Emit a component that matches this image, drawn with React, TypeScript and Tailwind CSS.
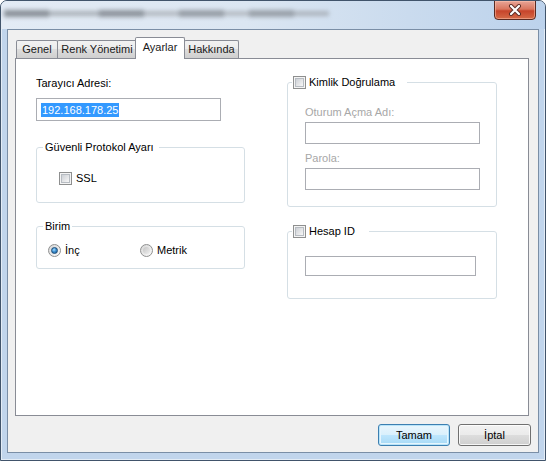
import React from "react";

const Check = () => (
  <span className="inline-flex w-[13px] h-[13px] shrink-0 border border-[#8e8f8f] bg-[#f4f4f4] p-[1px]">
    <span className="block w-full h-full border border-[#b7bcc2] bg-[linear-gradient(135deg,#cdd1d6_0%,#e6e7e9_60%,#f7f7f7_100%)]" />
  </span>
);

const Radio = ({ checked }: { checked?: boolean }) => (
  <span className="inline-flex w-[13px] h-[13px] shrink-0 rounded-full border border-[#8e8f8f] bg-[linear-gradient(135deg,#d6d6d6,#fbfbfb)] items-center justify-center">
    {checked ? (
      <span className="block w-[7px] h-[7px] rounded-full border border-[#1d4d78] bg-[radial-gradient(circle_at_40%_35%,#a9e0ff_0%,#3d8fd0_45%,#1b5a92_100%)]" />
    ) : (
      <span className="block w-[7px] h-[7px] rounded-full bg-[linear-gradient(135deg,#c4c4c4,#efefef)]" />
    )}
  </span>
);

const Tab = ({
  label,
  w,
  selected,
  first,
}: {
  label: string;
  w: string;
  selected?: boolean;
  first?: boolean;
}) => (
  <div
    className={
      selected
        ? `relative z-10 -ml-[2px] h-[22px] mb-[-1px] ${w} flex items-start justify-center pt-[3px] bg-white border border-b-0 border-[#898c95] rounded-t-[2px]`
        : `relative ${first ? "" : "-ml-px"} h-[18px] ${w} flex items-center justify-center bg-[linear-gradient(#f2f2f2_0%,#ebebeb_50%,#dddddd_50%,#cfcfcf_100%)] border border-b-0 border-[#898c95] rounded-t-[2px]`
    }
  >
    <span className="text-[11px] leading-[13px] text-[#1a1a1a]">{label}</span>
  </div>
);

export default function App() {
  return (
    <div className="w-[546px] h-[461px] bg-white font-['Liberation_Sans',Arial,sans-serif] text-black">
      <div className="w-full h-full flex flex-col rounded-t-[7px] border border-[#41546b] bg-[#c1d5ec] shadow-[inset_0_0_0_1px_rgba(255,255,255,0.55)] overflow-hidden">
        {/* Title bar */}
        <div className="h-[28px] shrink-0 flex items-start justify-between bg-[linear-gradient(90deg,#e3ebf5_0%,#dbe6f2_45%,#cadbee_75%,#bcd2ec_100%)]">
          <div className="mt-[9px] ml-[3px] flex items-center blur-[2px] opacity-75">
            <div className="w-[45px] h-[7px] bg-[#6f757c]" />
            <div className="w-[50px] h-[5px] bg-[#9aa0a6]" />
            <div className="w-[45px] h-[7px] bg-[#747a81]" />
            <div className="w-[35px] h-[5px] bg-[#a5aab0]" />
            <div className="w-[45px] h-[7px] bg-[#80868d]" />
            <div className="w-[25px] h-[5px] bg-[#a8adb3]" />
            <div className="w-[45px] h-[7px] bg-[#858b92]" />
            <div className="w-[35px] h-[5px] bg-[#a0a6ad]" />
          </div>
          <div className="mr-[9px] -mt-px w-[42px] h-[20px] rounded-b-[4px] border border-[#5a2a22] bg-[linear-gradient(#e8a597_0%,#d9765f_45%,#c7442b_55%,#d56a47_100%)] shadow-[inset_0_0_0_1px_rgba(255,200,180,0.5)] flex items-center justify-center">
            <svg width="14" height="12" viewBox="0 0 14 12">
              <path d="M3 2 L11 10 M11 2 L3 10" stroke="#5b2d26" strokeWidth="4" strokeLinecap="round" />
              <path d="M3 2 L11 10 M11 2 L3 10" stroke="#ffffff" strokeWidth="2.2" strokeLinecap="round" />
            </svg>
          </div>
        </div>

        {/* Client area */}
        <div className="flex-1 mx-[6px] mb-[7px] border border-[#7a8ea6] bg-[#f0f0f0] flex flex-col">
          {/* Tabs */}
          <div className="mt-[7px] h-[21px] pl-[8px] flex items-end">
            <Tab label="Genel" w="w-[42px]" first />
            <Tab label="Renk Yönetimi" w="w-[80px]" />
            <Tab label="Ayarlar" w="w-[50px]" selected />
            <Tab label="Hakkında" w="w-[55px]" />
          </div>

          {/* Panel */}
          <div className="ml-[7px] w-[514px] h-[358px] bg-white border border-[#898c95] flex pl-[20px]">
            {/* Left column */}
            <div className="w-[209px] flex flex-col">
              <div className="mt-[16px] text-[11px] leading-[16px]">Tarayıcı Adresi:</div>
              <div className="mt-[7px] w-[185px] h-[23px] border border-[#abadb3] bg-white flex items-center pl-[4px]">
                <span className="bg-[#3399ff] text-white text-[11px] leading-[14px] px-px">192.168.178.25</span>
              </div>

              <fieldset className="mt-[18px] border border-[#d5dfe5] rounded-[3px]">
                <legend className="ml-[6px] pl-[2px] pr-[5px] text-[11px] leading-[16px]">Güvenli Protokol Ayarı</legend>
                <div className="pt-[17px] pb-[17px] pl-[22px] flex items-center h-[47px]">
                  <Check />
                  <span className="ml-[4px] text-[11px] leading-[13px]">SSL</span>
                </div>
              </fieldset>

              <fieldset className="mt-[15px] border border-[#d5dfe5] rounded-[3px]">
                <legend className="ml-[6px] pl-[2px] pr-[2px] text-[11px] leading-[16px]">Birim</legend>
                <div className="pt-[10px] pb-[11px] pl-[11px] flex items-center">
                  <div className="w-[92px] flex items-center">
                    <Radio checked />
                    <span className="ml-[4px] text-[11px] leading-[13px]">İnç</span>
                  </div>
                  <div className="flex items-center">
                    <Radio />
                    <span className="ml-[4px] text-[11px] leading-[13px]">Metrik</span>
                  </div>
                </div>
              </fieldset>
            </div>

            {/* Right column */}
            <div className="ml-[42px] w-[210px] flex flex-col">
              <fieldset className="mt-[15px] border border-[#d5dfe5] rounded-[3px]">
                <legend className="ml-[4px] pl-px pr-[12px] h-[16px] flex items-center">
                  <Check />
                  <span className="ml-[3px] text-[11px] leading-[16px]">Kimlik Doğrulama</span>
                </legend>
                <div className="pt-[14px] pb-[16px] pl-[17px] flex flex-col">
                  <div className="text-[11px] leading-[16px] text-[#a7a7a7]">Oturum Açma Adı:</div>
                  <div className="mt-[2px] w-[175px] h-[22px] border border-[#abadb3] bg-white" />
                  <div className="mt-[6px] text-[11px] leading-[16px] text-[#a7a7a7]">Parola:</div>
                  <div className="mt-[2px] w-[175px] h-[22px] border border-[#abadb3] bg-white" />
                </div>
              </fieldset>

              <fieldset className="mt-[16px] border border-[#d5dfe5] rounded-[3px]">
                <legend className="ml-[4px] pl-px pr-[14px] h-[16px] flex items-center">
                  <Check />
                  <span className="ml-[3px] text-[11px] leading-[16px]">Hesap ID</span>
                </legend>
                <div className="pt-[17px] pb-[22px] pl-[17px]">
                  <div className="w-[171px] h-[20px] border border-[#abadb3] bg-white" />
                </div>
              </fieldset>
            </div>
          </div>

          {/* Buttons */}
          <div className="mt-[8px] pr-[7px] flex justify-end gap-[8px]">
            <div className="w-[72px] h-[22px] rounded-[3px] border border-[#3c7fb1] bg-[linear-gradient(#eaf6fd_0%,#d9f0fc_50%,#bee6fd_50%,#a7d9f5_100%)] shadow-[inset_0_0_0_1px_#b9e4f9,inset_0_0_0_2px_#e6f5fd] flex items-center justify-center">
              <span className="text-[11px] leading-[13px]">Tamam</span>
            </div>
            <div className="w-[73px] h-[22px] rounded-[3px] border border-[#707070] bg-[linear-gradient(#f2f2f2_0%,#ebebeb_50%,#dddddd_50%,#cfcfcf_100%)] shadow-[inset_0_0_0_1px_rgba(255,255,255,0.8)] flex items-center justify-center">
              <span className="text-[11px] leading-[13px]">İptal</span>
            </div>
          </div>
        </div>
      </div>
    </div>
  );
}
